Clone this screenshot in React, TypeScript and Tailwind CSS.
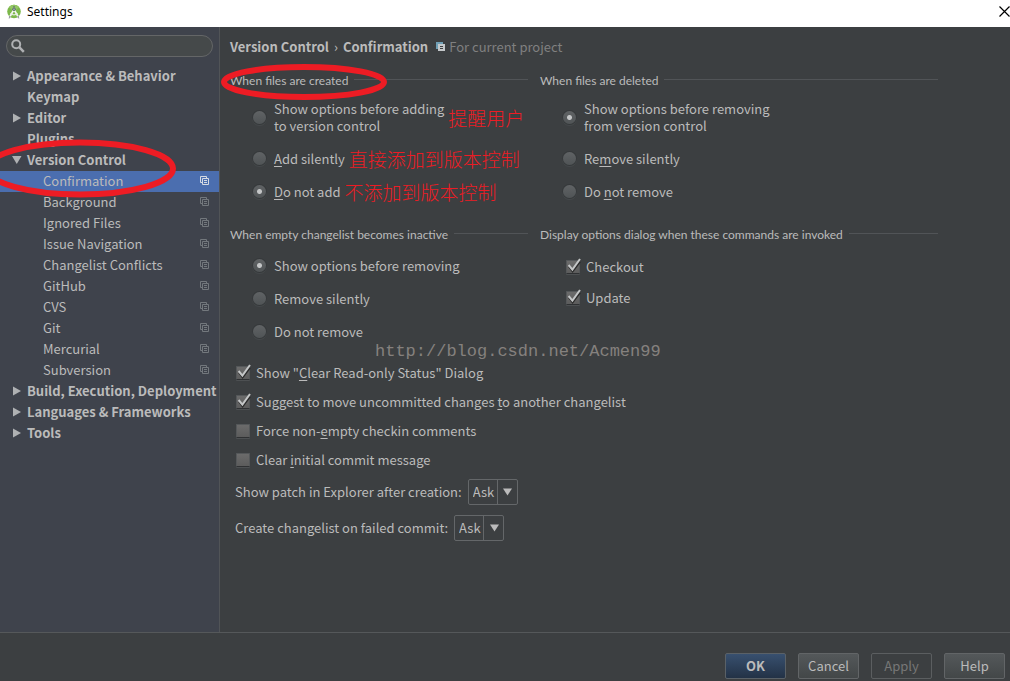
import type { ReactNode } from "react";

type NavItem = {
  label: string;
  level: 0 | 1;
  arrow?: "right" | "down";
  selected?: boolean;
};

const NAV: NavItem[] = [
  { label: "Appearance & Behavior", level: 0, arrow: "right" },
  { label: "Keymap", level: 0 },
  { label: "Editor", level: 0, arrow: "right" },
  { label: "Plugins", level: 0 },
  { label: "Version Control", level: 0, arrow: "down" },
  { label: "Confirmation", level: 1, selected: true },
  { label: "Background", level: 1 },
  { label: "Ignored Files", level: 1 },
  { label: "Issue Navigation", level: 1 },
  { label: "Changelist Conflicts", level: 1 },
  { label: "GitHub", level: 1 },
  { label: "CVS", level: 1 },
  { label: "Git", level: 1 },
  { label: "Mercurial", level: 1 },
  { label: "Subversion", level: 1 },
  { label: "Build, Execution, Deployment", level: 0, arrow: "right" },
  { label: "Languages & Frameworks", level: 0, arrow: "right" },
  { label: "Tools", level: 0, arrow: "right" },
];

function StudioLogo() {
  return (
    <svg width="16" height="16" viewBox="0 0 16 16" aria-hidden="true">
      <circle cx="7" cy="7.5" r="6.8" fill="#7cb84a" />
      <path d="M1.9 3a6.8 6.8 0 0 1 10.2 0L7 8z" fill="#93c763" />
      <path d="M6.4 6.5 3 12.5M7.6 6.5 11 12.5" stroke="#f4f6f2" strokeWidth="1.7" fill="none" />
      <path d="M3.4 9.6c2 1.5 5.2 1.5 7.2 0" stroke="#e6ebe2" strokeWidth="1.3" fill="none" />
      <path d="M2 11.8 1.8 15l2.4-2.2zM12 11.8l.2 3.2-2.4-2.2z" fill="#9a9fa3" />
      <circle cx="7" cy="5.2" r="1.7" fill="#5b6a70" />
      <circle cx="7" cy="5.2" r=".6" fill="#e8eee4" />
      <path d="M7 2v1.6" stroke="#5b6a70" strokeWidth="1.2" />
    </svg>
  );
}

function Arrow({ dir }: { dir: "right" | "down" }) {
  return (
    <svg width="10" height="10" viewBox="0 0 10 10" fill="#afb1b3" aria-hidden="true">
      {dir === "right" ? <path d="M1 .5v9L9 5z" /> : <path d="M0 1h9.5L4.75 9z" />}
    </svg>
  );
}

function ProjectIcon({ selected }: { selected?: boolean }) {
  return (
    <svg
      width="10"
      height="10"
      viewBox="0 0 10 10"
      fill="none"
      stroke={selected ? "#d5dae3" : "#73787d"}
      aria-hidden="true"
    >
      <path d="M2 6.5H.5v-6h6V2M2.5 2.5h6v6h-6zM4 4.5h3M4 6.5h3" />
    </svg>
  );
}

function Radio({
  name,
  checked,
  children,
  note,
}: {
  name: string;
  checked?: boolean;
  children: ReactNode;
  note?: string;
}) {
  return (
    <div className="flex items-center gap-1">
      <label className="flex items-center gap-2">
        <input
          type="radio"
          name={name}
          defaultChecked={checked}
          className="size-[13px] shrink-0 appearance-none rounded-full bg-[linear-gradient(#606365,#505456)] shadow-[0_0_0_1px_#36393b,0_1px_0_1px_#45494b] checked:bg-[radial-gradient(circle,#c4c6c7_0px,#c4c6c7_2px,transparent_3px),linear-gradient(#606365,#505456)]"
        />
        <span className="whitespace-nowrap leading-[17px]">{children}</span>
      </label>
      {note && (
        <span className="whitespace-nowrap text-[19px] font-light leading-[17px] text-[#ed1c24]">{note}</span>
      )}
    </div>
  );
}

function Check({ checked, children }: { checked?: boolean; children: ReactNode }) {
  return (
    <label className="flex items-center gap-[6px] leading-[17px]">
      <span className="relative flex size-[14px] shrink-0">
        <input
          type="checkbox"
          defaultChecked={checked}
          className="peer size-[14px] appearance-none rounded-[1px] border border-[#55585a] border-b-[#2f3133] bg-[linear-gradient(#6b6b6b,#5c5c5c)] shadow-[0_1px_0_#4d5052]"
        />
        <svg
          viewBox="0 0 16 16"
          fill="none"
          className="pointer-events-none absolute -top-[2px] left-0 hidden size-4 peer-checked:block"
          aria-hidden="true"
        >
          <path d="M3 8.5l3.600 4.800L14 3.600" stroke="#2b2b2b" strokeWidth="2" />
          <path d="M2.600 7l3.800 4.600L14 1" stroke="#c4c6c7" strokeWidth="2" />
        </svg>
      </span>
      <span className="whitespace-nowrap">{children}</span>
    </label>
  );
}

function Group({ title, children }: { title: string; children: ReactNode }) {
  return (
    <fieldset className="min-w-0">
      <legend className="flex w-full items-center gap-[6px] font-['Lato',sans-serif] text-[12px] leading-4">
        <span className="whitespace-nowrap">{title}</span>
        <span className="mb-1 h-px grow bg-[#515457]" />
      </legend>
      {children}
    </fieldset>
  );
}

function AskSelect({ id, label }: { id: string; label: string }) {
  return (
    <div className="flex items-center gap-[6px]">
      <label htmlFor={id}>{label}</label>
      <div className="relative flex">
        <select
          id={id}
          className="h-[26px] w-[50px] appearance-none rounded-[2px] border border-[#646769] bg-[#3c3f41] pl-1 leading-4"
        >
          <option>Ask</option>
          <option>Yes</option>
          <option>No</option>
        </select>
        <span className="pointer-events-none absolute inset-y-0 right-0 flex w-[21px] items-center justify-center border-l border-[#646769]">
          <svg width="9" height="8" viewBox="0 0 9 8" fill="#bbbbbb" aria-hidden="true">
            <path d="M0 .5h9L4.5 7.5z" />
          </svg>
        </span>
      </div>
    </div>
  );
}

const U = ({ children }: { children: ReactNode }) => (
  <span className="underline underline-offset-2">{children}</span>
);

const BUTTON = "h-[26px] w-[61px] rounded-[2px] border leading-4";

export default function App() {
  return (
    <div className="relative flex min-h-screen flex-col overflow-hidden bg-[#3c3f41] font-['Noto_Sans_CJK_SC','Noto_Sans',sans-serif] text-[13px] text-[#bbbbbb]">
      <header className="flex h-[27px] items-center bg-white pb-1 pl-[7px] text-black">
        <StudioLogo />
        <h1 className="ml-1 font-['Noto_Sans',sans-serif] text-[12px]">Settings</h1>
        <button type="button" aria-label="Close" className="ml-auto">
          <svg width="11" height="11" viewBox="0 0 11 11" stroke="#000" strokeWidth="1.2" aria-hidden="true">
            <path d="M.5.5l10 10M10.5.5l-10 10" />
          </svg>
        </button>
      </header>

      <div className="flex grow">
        <aside className="w-[220px] shrink-0 border-r border-[#515457] bg-[#3f434c] pt-2">
          <div className="mx-[6px] flex h-[22px] items-center rounded-full border border-[#646667] bg-[#45494a] pl-1">
            <svg width="14" height="14" viewBox="0 0 14 14" fill="none" stroke="#afb1b3" aria-hidden="true">
              <circle cx="5.2" cy="5.2" r="4" strokeWidth="2" />
              <path d="M8.2 8.2l4.6 4.6" strokeWidth="2.5" />
            </svg>
            <input type="search" aria-label="Search settings" className="min-w-0 grow bg-transparent px-1 outline-none" />
          </div>
          <nav className="mt-[9px]">
            <ul>
              {NAV.map((item) => (
                <li key={item.label}>
                  <a
                    href="#"
                    aria-current={item.selected ? "page" : undefined}
                    className={
                      "flex h-[21px] items-center whitespace-nowrap pb-px leading-4 " +
                      (item.level === 0 ? "pl-3 font-bold " : "pl-[43px] pr-[9px] ") +
                      (item.selected ? "bg-[#4b6eaf]" : "")
                    }
                  >
                    {item.level === 0 && (
                      <span className="flex w-[15px] shrink-0">{item.arrow && <Arrow dir={item.arrow} />}</span>
                    )}
                    <span className="grow">{item.label}</span>
                    {item.level === 1 && <ProjectIcon selected={item.selected} />}
                  </a>
                </li>
              ))}
            </ul>
          </nav>
        </aside>

        <main className="min-w-0 grow pl-[10px] pt-[11px]">
          <div className="flex h-[17px] items-center whitespace-nowrap leading-[17px]">
            <h2 className="flex gap-[5px] font-bold">
              <span>Version Control</span>
              <span className="font-normal">›</span>
              <span>Confirmation</span>
            </h2>
            <svg width="9" height="9" viewBox="0 0 9 9" className="ml-2" shapeRendering="crispEdges" aria-hidden="true">
              <path d="M0 0h7v2H2v5H0z" fill="#6f9fb5" />
              <path d="M2 2h7v7H2z" fill="#c4c8ca" />
              <path d="M4 4h3v1H4zM4 6h3v1H4z" fill="#3c3f41" />
            </svg>
            <span className="ml-1 text-[#808080]">For current project</span>
          </div>

          <div className="mt-[18px] grid max-w-[708px] grid-cols-[298px_minmax(0,1fr)] gap-x-3">
            <Group title="When files are created">
              <div className="flex flex-col gap-4 pb-[27px] pl-[23px] pt-[11px]">
                <Radio name="created" note="提醒用户">
                  Show options before adding
                  <br />
                  to version control
                </Radio>
                <Radio name="created" note="直接添加到版本控制">
                  <U>A</U>dd silently
                </Radio>
                <Radio name="created" checked note="不添加到版本控制">
                  <U>D</U>o not add
                </Radio>
              </div>
            </Group>
            <Group title="When files are deleted">
              <div className="flex flex-col gap-4 pb-[27px] pl-[23px] pt-[11px]">
                <Radio name="deleted" checked>
                  Show options before removing
                  <br />
                  from version control
                </Radio>
                <Radio name="deleted">
                  Re<U>m</U>ove silently
                </Radio>
                <Radio name="deleted">
                  Do <U>n</U>ot remove
                </Radio>
              </div>
            </Group>
            <Group title="When empty changelist becomes inactive">
              <div className="flex flex-col gap-4 pl-[23px] pt-[14px]">
                <Radio name="inactive" checked>
                  Show options before removing
                </Radio>
                <Radio name="inactive">Remove silently</Radio>
                <Radio name="inactive">Do not remove</Radio>
              </div>
            </Group>
            <Group title="Display options dialog when these commands are invoked">
              <div className="flex flex-col gap-[14px] pl-[26px] pt-[15px]">
                <Check checked>Checkout</Check>
                <Check checked>Update</Check>
              </div>
            </Group>
          </div>

          <div className="mt-6 flex flex-col gap-3 pl-[6px]">
            <Check checked>
              Show "<U>C</U>lear Read-only Status" Dialog
            </Check>
            <Check checked>
              Suggest to move uncommitted changes <U>t</U>o another changelist
            </Check>
            <Check>
              Force non-<U>e</U>mpty checkin comments
            </Check>
            <Check>
              Clear <U>i</U>nitial commit message
            </Check>
          </div>

          <div className="mt-[11px] flex flex-col gap-[10px] pl-[5px]">
            <AskSelect id="show-patch" label="Show patch in Explorer after creation:" />
            <AskSelect id="create-changelist" label="Create changelist on failed commit:" />
          </div>
        </main>
      </div>

      <footer className="flex h-[49px] shrink-0 items-end justify-end gap-3 border-t border-[#55585a] pb-[2px] pr-[5px]">
        <button type="button" className={BUTTON + " border-[#5a6167] bg-[linear-gradient(#38506f,#233246)] font-bold"}>
          OK
        </button>
        <button type="button" className={BUTTON + " border-[#626567] bg-[linear-gradient(#54585a,#434748)]"}>
          Cancel
        </button>
        <button type="button" disabled className={BUTTON + " border-[#5b5e60] text-[#777777]"}>
          Apply
        </button>
        <button type="button" className={BUTTON + " border-[#626567] bg-[linear-gradient(#54585a,#434748)]"}>
          Help
        </button>
      </footer>

      <svg
        className="pointer-events-none absolute left-0 top-0 h-[210px] w-[400px]"
        viewBox="0 0 400 210"
        fill="none"
        stroke="#ed1c24"
        strokeWidth="6"
        aria-hidden="true"
      >
        <ellipse cx="304" cy="82" rx="80" ry="15" />
        <ellipse cx="80" cy="168.5" rx="93" ry="26" />
      </svg>
      <span className="pointer-events-none absolute left-[375px] top-[342px] font-['Liberation_Mono',monospace] text-[17px] leading-5 text-[#85817e]">
        http://blog.csdn.net/Acmen99
      </span>
    </div>
  );
}
